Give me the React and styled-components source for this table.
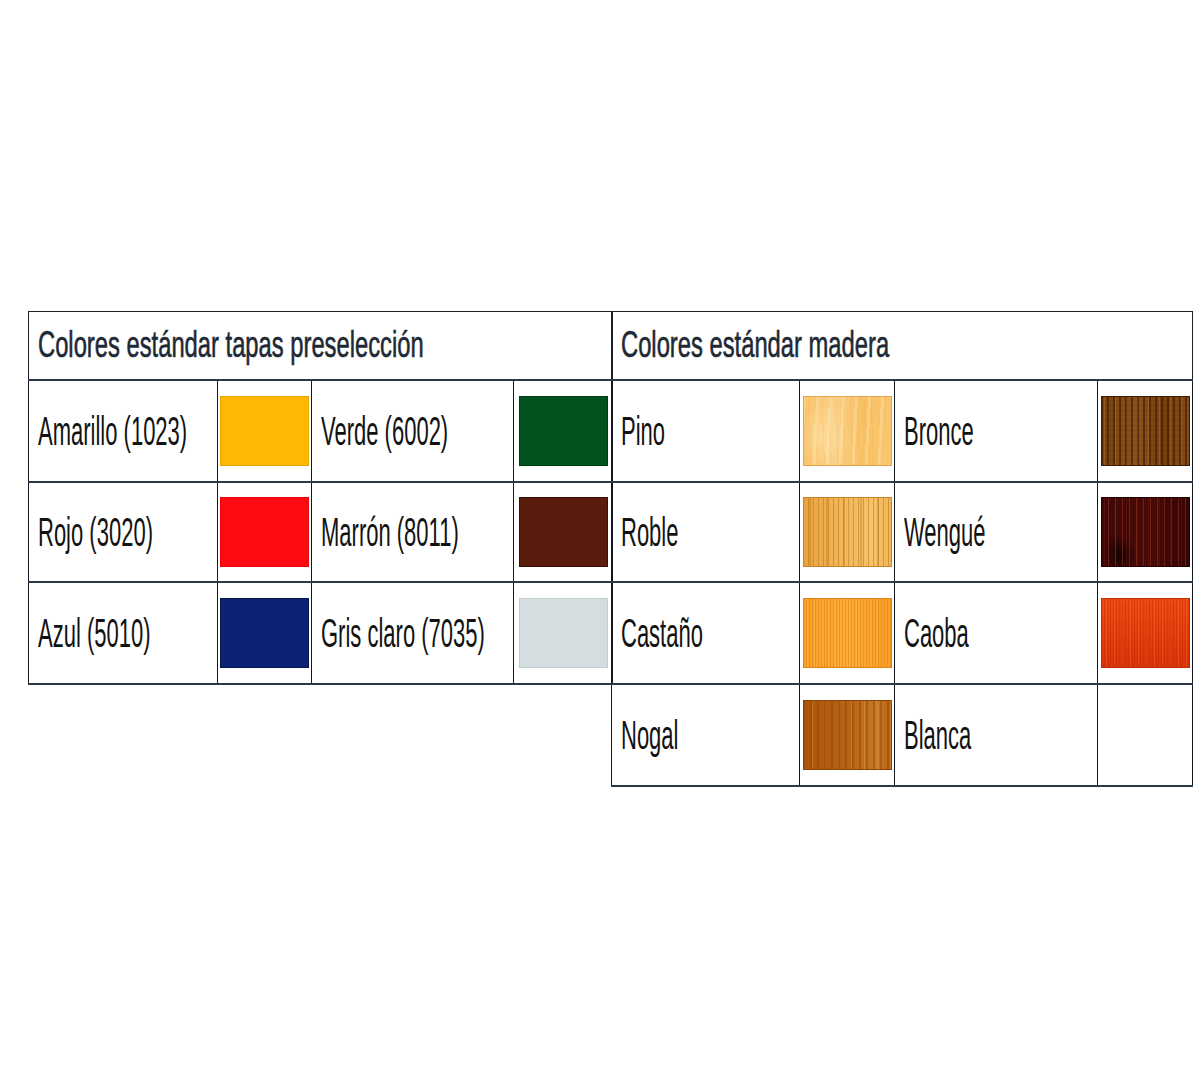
import React from 'react';
import styled, { createGlobalStyle } from 'styled-components';

const GlobalStyle = createGlobalStyle`
  html, body {
    margin: 0;
    padding: 0;
    background: #ffffff;
  }
  body {
    font-family: "Liberation Sans", Arial, sans-serif;
  }
`;

const Page = styled.div`
  width: 1200px;
  height: 1080px;
  padding-top: 311px;
  padding-left: 28px;
  box-sizing: border-box;
  display: flex;
  align-items: flex-start;
`;

const Table = styled.table`
  border-collapse: collapse;
  table-layout: fixed;
  width: ${props => props.$width}px;
  & + & {
    margin-left: -2px;
  }
`;

const Row = styled.tr`
  height: ${props => props.$height}px;
`;

const HeaderCell = styled.th`
  border: 1px solid #1b222c;
  padding: 0 0 0 9px;
  text-align: left;
  vertical-align: middle;
  font-weight: 400;
  white-space: nowrap;
  overflow: visible;
`;

const HeaderText = styled.span`
  display: inline-block;
  font-size: 36px;
  color: #1e2935;
  -webkit-text-stroke: 0.6px #1e2935;
  transform: scaleX(0.66);
  transform-origin: left center;
  line-height: 1;
`;

const LabelCell = styled.td`
  border-left: 1px solid #111820;
  border-right: 1px solid #111820;
  border-top: 2px solid #2c3845;
  border-bottom: 2px solid #2c3845;
  padding: 0 0 0 9px;
  vertical-align: middle;
  white-space: nowrap;
  overflow: visible;
`;

const LabelText = styled.span`
  display: inline-block;
  font-size: 40px;
  color: #121212;
  transform: scaleX(0.55);
  transform-origin: left center;
  line-height: 1;
`;

const SwatchCell = styled(LabelCell)`
  padding: 0 2px 0 2px;
`;

const Swatch = styled.div`
  width: 89px;
  height: 70px;
  margin: 0 auto;
  background: ${props => props.$fill};
  box-shadow: inset 0 0 0 1px ${props => props.$edge || 'rgba(0,0,0,0.18)'};
`;

// wood grain: two stripe sets of different periods give an uneven figure
const woods = {
  pino: {
    edge: '#e3a44c',
    fill: `
      repeating-linear-gradient(93deg, rgba(255,240,195,0.3) 0 3px, transparent 3px 13px),
      repeating-linear-gradient(88deg, rgba(230,160,70,0.16) 0 1px, transparent 1px 7px),
      radial-gradient(ellipse 36px 50px at 24% 58%, rgba(255,228,170,0.6), transparent 70%),
      linear-gradient(90deg, #f9c46c, #fbcf84 35%, #f8c064 68%, #fac870)
    `,
  },
  roble: {
    edge: '#c88224',
    fill: `
      repeating-linear-gradient(90deg, rgba(185,115,25,0.5) 0 1px, transparent 1px 5px),
      repeating-linear-gradient(90deg, transparent 0 6px, rgba(190,120,30,0.4) 6px 8px, transparent 8px 17px),
      linear-gradient(90deg, #e9a23e, #f2b658 45%, #f6c36a 78%, #f0b454)
    `,
  },
  castano: {
    edge: '#e08214',
    fill: `
      repeating-linear-gradient(90deg, rgba(225,128,12,0.55) 0 1px, transparent 1px 3px),
      repeating-linear-gradient(90deg, transparent 0 4px, rgba(255,195,95,0.35) 4px 5px, transparent 5px 7px),
      linear-gradient(90deg, #fba02a, #fdab3a 50%, #fb9f28)
    `,
  },
  nogal: {
    edge: '#8a4408',
    fill: `
      repeating-linear-gradient(90deg, rgba(140,66,8,0.45) 0 2px, transparent 2px 7px),
      repeating-linear-gradient(90deg, transparent 0 9px, rgba(225,155,75,0.4) 9px 10px, transparent 10px 13px),
      linear-gradient(90deg, #ac560b, #b96414 55%, #c77a28 82%, #b8620f)
    `,
  },
  bronce: {
    edge: '#3c1c04',
    fill: `
      repeating-linear-gradient(90deg, rgba(50,20,2,0.55) 0 2px, transparent 2px 6px),
      repeating-linear-gradient(90deg, transparent 0 3px, rgba(200,130,50,0.35) 3px 4px, transparent 4px 11px),
      repeating-linear-gradient(0deg, rgba(40,15,0,0.12) 0 1px, transparent 1px 5px),
      linear-gradient(90deg, #7a420e, #8e521a 40%, #76400e 70%, #8a4e16)
    `,
  },
  wengue: {
    edge: '#220302',
    fill: `
      repeating-linear-gradient(90deg, rgba(175,65,50,0.4) 0 1px, transparent 1px 7px),
      repeating-linear-gradient(90deg, transparent 0 3px, rgba(120,30,20,0.35) 3px 4px, transparent 4px 11px),
      radial-gradient(ellipse 20px 24px at 22% 82%, rgba(0,0,0,0.7), transparent 80%),
      linear-gradient(90deg, #3c0806, #4a0a07 50%, #360604)
    `,
  },
  caoba: {
    edge: '#c02c06',
    fill: `
      repeating-linear-gradient(90deg, rgba(200,40,5,0.45) 0 1px, transparent 1px 3px),
      repeating-linear-gradient(90deg, transparent 0 5px, rgba(255,115,45,0.3) 5px 6px, transparent 6px 8px),
      linear-gradient(180deg, #ed4c13, #e23c0c 60%, #d6330a)
    `,
  },
};

const preselection = [
  [
    { name: 'Amarillo (1023)', color: '#ffb803', edge: '#e9a400' },
    { name: 'Verde (6002)', color: '#00521f', edge: '#003a14' },
  ],
  [
    { name: 'Rojo (3020)', color: '#ff0a10', edge: '#e80008' },
    { name: 'Marrón (8011)', color: '#5a1d0d', edge: '#3a1006' },
  ],
  [
    { name: 'Azul (5010)', color: '#0b2372', edge: '#061650' },
    { name: 'Gris claro (7035)', color: '#d4dddf', edge: '#c2cccf' },
  ],
];

const wood = [
  [
    { name: 'Pino', wood: 'pino' },
    { name: 'Bronce', wood: 'bronce' },
  ],
  [
    { name: 'Roble', wood: 'roble' },
    { name: 'Wengué', wood: 'wengue' },
  ],
  [
    { name: 'Castaño', wood: 'castano' },
    { name: 'Caoba', wood: 'caoba' },
  ],
  [
    { name: 'Nogal', wood: 'nogal' },
    { name: 'Blanca', wood: null },
  ],
];

const rowHeights = [102, 100, 102, 102];

const ColourSwatch = ({ item }) => {
  if (item.wood) {
    const w = woods[item.wood];
    return <Swatch $fill={w.fill} $edge={w.edge} />;
  }
  if (item.color) {
    return <Swatch $fill={item.color} $edge={item.edge} />;
  }
  return null;
};

const ColourTable = ({ title, rows, widths }) => {
  const total = widths.reduce((a, b) => a + b, 0);
  return (
    <Table $width={total}>
      <colgroup>
        {widths.map((w, i) => <col key={i} style={{ width: w }} />)}
      </colgroup>
      <tbody>
        <Row $height={68}>
          <HeaderCell colSpan={4}>
            <HeaderText>{title}</HeaderText>
          </HeaderCell>
        </Row>
        {rows.map((pair, i) => (
          <Row key={i} $height={rowHeights[i]}>
            {pair.map(item => (
              <React.Fragment key={item.name}>
                <LabelCell>
                  <LabelText>{item.name}</LabelText>
                </LabelCell>
                <SwatchCell>
                  <ColourSwatch item={item} />
                </SwatchCell>
              </React.Fragment>
            ))}
          </Row>
        ))}
      </tbody>
    </Table>
  );
};

const App = () => (
  <>
    <GlobalStyle />
    <Page>
      <ColourTable
        title="Colores estándar tapas preselección"
        rows={preselection}
        widths={[189, 94, 202, 99]}
      />
      <ColourTable
        title="Colores estándar madera"
        rows={wood}
        widths={[188, 95, 203, 95]}
      />
    </Page>
  </>
);

export default App;
